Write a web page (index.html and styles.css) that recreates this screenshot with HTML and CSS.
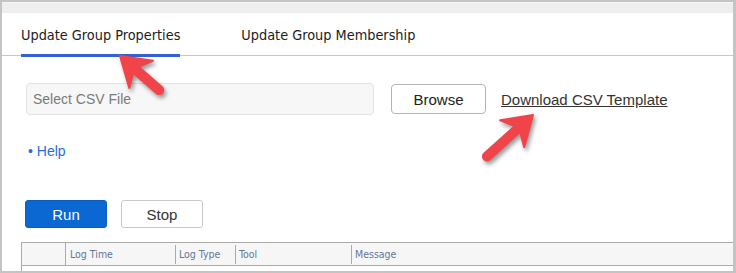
FILE: index.html
```html
<!DOCTYPE html>
<html lang="en">
<head>
    <meta charset="UTF-8">
    <title>Update Group Properties</title>
    <link rel="stylesheet" href="styles.css">
</head>
<body>
    <div class="frame">
        <div class="top-strip"></div>

        <div class="tabs">
            <span class="tab active">Update Group Properties</span>
            <span class="tab">Update Group Membership</span>
        </div>

        <div class="upload-row">
            <input type="text" class="file-input" placeholder="Select CSV File">
            <button class="btn-browse">Browse</button>
            <a href="#" class="template-link">Download CSV Template</a>
        </div>

        <div class="help"><a href="#">&bull; Help</a></div>

        <div class="actions">
            <button class="btn-run">Run</button>
            <button class="btn-stop">Stop</button>
        </div>

        <div class="log-table">
            <div class="log-head">
                <div class="cell first"></div>
                <div class="cell">Log Time</div>
                <div class="cell split">Log Type</div>
                <div class="cell split">Tool</div>
                <div class="cell split">Message</div>
            </div>
        </div>

        <!-- callout arrows -->
        <svg class="arrows" width="736" height="273" viewBox="0 0 736 273">
            <g transform="translate(120 56) rotate(41)">
                <line x1="20" y1="0" x2="52" y2="0" stroke="#f0444a" stroke-width="10" stroke-linecap="round"/>
                <polygon points="0,0 28,-18 21,-4 21,4 28,18" fill="#f0444a" stroke="#f0444a" stroke-width="2" stroke-linejoin="round"/>
            </g>
            <g transform="translate(533 115) rotate(138)">
                <line x1="20" y1="0" x2="62" y2="0" stroke="#f0444a" stroke-width="10" stroke-linecap="round"/>
                <polygon points="0,0 28,-18 21,-4 21,4 28,18" fill="#f0444a" stroke="#f0444a" stroke-width="2" stroke-linejoin="round"/>
            </g>
        </svg>
    </div>
</body>
</html>
```

FILE: styles.css
```css
body {
    margin: 0;
    font-family: "Liberation Sans", Arial, sans-serif;
    background: #fff;
}
.frame {
    position: relative;
    width: 736px;
    height: 273px;
    box-sizing: border-box;
    border: 2px solid #c4c4c4;
    border-right-width: 3px;
    overflow: hidden;
    background: #fff;
}
.top-strip {
    height: 10px;
    background: #eeeeee;
    border-top: 1px solid #f6f6f6;
}
.tabs {
    display: flex;
    gap: 61px;
    padding: 14px 0 0 19px;
    border-bottom: 1px solid #c8c8c8;
}
.tab {
    font-family: "DejaVu Sans", sans-serif;
    font-stretch: condensed;
    font-size: 14.35px;
    line-height: 17px;
    color: #1c1c1c;
    padding-bottom: 10px;
    border-bottom: 3px solid transparent;
    margin-bottom: -2px;
}
.tab.active {
    border-bottom-color: #3461d6;
}
.upload-row {
    display: flex;
    align-items: center;
    margin-top: 27px;
    padding-left: 24px;
}
.file-input {
    width: 348px;
    height: 32px;
    box-sizing: border-box;
    padding: 0 6px;
    background: #f7f7f7;
    border: 1px solid #e2e2e2;
    border-radius: 4px;
    font-family: "Liberation Sans", Arial, sans-serif;
    font-size: 14px;
    color: #333;
}
.file-input::placeholder {
    color: #7a7a7a;
}
.btn-browse {
    margin-left: 17px;
    width: 95px;
    height: 30px;
    background: #fff;
    border: 1px solid #b4b4b4;
    border-radius: 4px;
    font-family: "Liberation Sans", Arial, sans-serif;
    font-size: 15px;
    color: #222;
    cursor: pointer;
}
.template-link {
    margin-left: 15px;
    font-size: 15px;
    color: #333;
    text-decoration: underline;
}
.help {
    margin-top: 28px;
    padding-left: 26px;
    font-size: 14px;
    line-height: 16px;
}
.help a {
    color: #1f6fd6;
    text-decoration: none;
}
.actions {
    display: flex;
    gap: 14px;
    margin-top: 41px;
    padding-left: 23px;
}
.actions button {
    width: 82px;
    height: 28px;
    border-radius: 3px;
    font-family: "Liberation Sans", Arial, sans-serif;
    font-size: 15px;
    cursor: pointer;
}
.btn-run {
    background: #0b67d2;
    border: 1px solid #0b5fc0;
    color: #fff;
}
.btn-stop {
    background: #fff;
    border: 1px solid #c9c9c9;
    color: #333;
}
.log-table {
    margin: 14px 0 0 19px;
    border-left: 1px solid #ababab;
    height: 40px;
}
.log-head {
    display: grid;
    grid-template-columns: 44px 109px 60px 116px 1fr;
    height: 22px;
    background: #f6f6f6;
    border-top: 1px solid #ababab;
    border-bottom: 1px solid #ababab;
}
.cell {
    position: relative;
    padding-left: 4px;
    font-family: "DejaVu Sans", sans-serif;
    font-stretch: condensed;
    font-size: 10.5px;
    line-height: 22px;
    color: #65769a;
    white-space: nowrap;
}
.cell.first {
    border-right: 1px solid #ababab;
}
.cell.split::before {
    content: "";
    position: absolute;
    left: 0;
    top: 2px;
    bottom: 1px;
    width: 1px;
    background: #ababab;
}
.arrows {
    position: absolute;
    left: -2px;
    top: -2px;
    pointer-events: none;
    filter: drop-shadow(2px 3px 2px rgba(0, 0, 0, 0.4));
}
```
